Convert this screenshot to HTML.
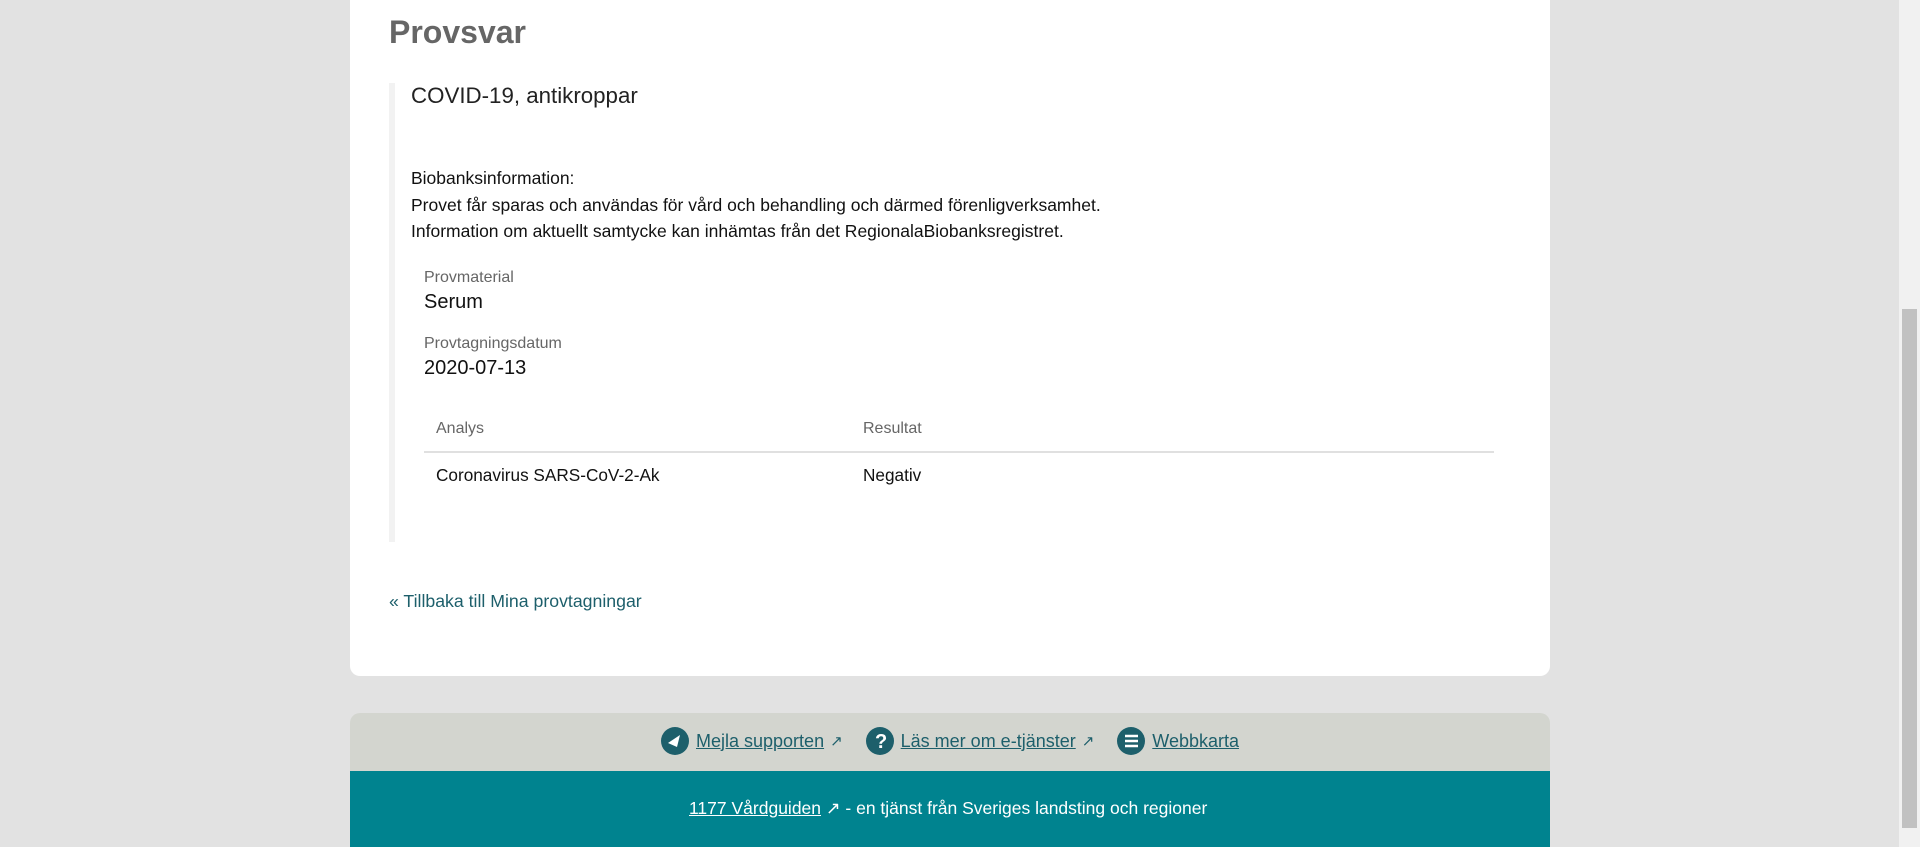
<!DOCTYPE html>
<html><head><meta charset="utf-8"><style>
*{margin:0;padding:0;box-sizing:border-box}
body{width:1920px;height:847px;background:#e2e2e2;font-family:"Liberation Sans",Arial,sans-serif;overflow:hidden;position:relative}
.card{position:absolute;left:350px;top:-10px;width:1200px;height:686px;background:#fff;border-radius:10px}
.abs{position:absolute;white-space:nowrap}
h1{position:absolute;left:389px;top:14px;font-size:32px;color:#666;font-weight:bold}
.bar{position:absolute;left:389px;top:83px;width:6px;height:459px;background:#f2f2f2}
.lbl{color:#666;font-size:16px}
.val{color:#111;font-size:20px}
.footer1{position:absolute;left:350px;top:713px;width:1200px;height:58px;background:#d3d5cf;border-radius:10px 10px 0 0}
.footer2{position:absolute;left:350px;top:771px;width:1200px;height:76px;background:#00838f}
a{color:#1d5f6b;text-decoration:underline}
.scroll{position:absolute;left:1899px;top:0;width:21px;height:847px;background:#f1f1f1}
.thumb{position:absolute;left:1902px;top:309px;width:15px;height:519px;background:#c1c1c1}
</style></head><body>
<div class="card"></div>
<h1>Provsvar</h1>
<div class="bar"></div>
<div class="abs" style="left:411px;top:83px;font-size:22.3px;color:#222">COVID-19, antikroppar</div>
<div class="abs" style="left:411px;top:165px;font-size:17.5px;line-height:26.5px;color:#111">Biobanksinformation:<br>Provet får sparas och användas för vård och behandling och därmed förenligverksamhet.<br>Information om aktuellt samtycke kan inhämtas från det RegionalaBiobanksregistret.</div>
<div class="abs lbl" style="left:424px;top:269px">Provmaterial</div>
<div class="abs val" style="left:424px;top:291px">Serum</div>
<div class="abs lbl" style="left:424px;top:335px">Provtagningsdatum</div>
<div class="abs val" style="left:424px;top:357px">2020-07-13</div>
<div class="abs lbl" style="left:436px;top:420px">Analys</div>
<div class="abs lbl" style="left:863px;top:420px">Resultat</div>
<div class="abs" style="left:424px;top:451px;width:1070px;height:2px;background:#e0e0e0"></div>
<div class="abs" style="left:436px;top:465px;font-size:17.2px;color:#111">Coronavirus SARS-CoV-2-Ak</div>
<div class="abs" style="left:863px;top:465px;font-size:17.2px;color:#111">Negativ</div>
<div class="abs" style="left:389px;top:591px;font-size:17.7px;color:#1d5f6b">« Tillbaka till Mina provtagningar</div>
<div class="footer1"></div>
<div class="footer2"></div>
<div class="abs" style="left:660px;top:726px;font-size:18px;color:#1d5f6b;display:flex;align-items:center;gap:6px">
<svg width="30" height="30" viewBox="0 0 30 30"><circle cx="15" cy="15" r="14" fill="#1d5f6b"/><path d="M8 17l12-8-3 12z" fill="#fff"/></svg><a>Mejla supporten</a><span style="font-size:15px">↗</span>
<span style="width:10px"></span>
<svg width="30" height="30" viewBox="0 0 30 30"><circle cx="15" cy="15" r="14" fill="#1d5f6b"/><text x="10" y="22" fill="#fff" font-size="20" font-weight="bold" font-family="Liberation Sans">?</text></svg><a>Läs mer om e-tjänster</a><span style="font-size:15px">↗</span>
<span style="width:10px"></span>
<svg width="30" height="30" viewBox="0 0 30 30"><circle cx="15" cy="15" r="14" fill="#1d5f6b"/><path d="M9 10h13M9 15h13M9 20h13" stroke="#fff" stroke-width="2.5"/></svg><a>Webbkarta</a></div>
<div class="abs" style="left:689px;top:798px;font-size:17.5px;color:#fff"><a style="color:#fff">1177 Vårdguiden</a> ↗ - en tjänst från Sveriges landsting och regioner</div>
<div class="scroll"></div><div class="thumb"></div>
</body></html>
